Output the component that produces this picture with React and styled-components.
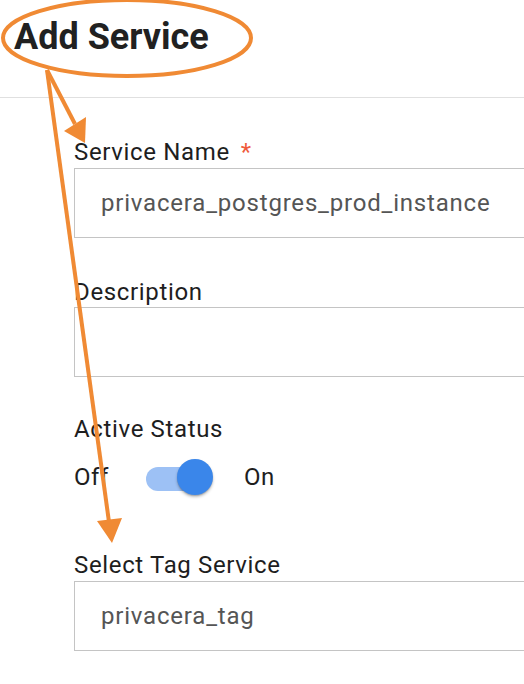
import React from "react";
import styled, { createGlobalStyle } from "styled-components";

const Global = createGlobalStyle`
  html, body { margin: 0; padding: 0; background: #fff; }
  body { font-family: Roboto, "Liberation Sans", sans-serif; color: #212121; }
  * { box-sizing: border-box; }
`;

const Page = styled.div`
  position: relative;
  width: 524px;
  height: 684px;
  overflow: hidden;
  background: #fff;
`;

const Header = styled.header`
  height: 98px;
  padding: 13px 0 0 14px;
  border-bottom: 1px solid #e0e0e0;
`;

const Title = styled.h1`
  margin: 0;
  font-size: 36px;
  line-height: 48px;
  font-weight: 700;
  color: #212121;
`;

const Form = styled.div`
  display: flex;
  flex-direction: column;
  padding: 40px 0 0 74px;
`;

const Field = styled.div`
  display: flex;
  flex-direction: column;
  margin-bottom: ${(p) => p.$gap ?? 40}px;
`;

const Label = styled.label`
  font-size: 24px;
  line-height: 28px;
  letter-spacing: 0.65px;
  color: #1e1e1e;
  margin-bottom: ${(p) => p.$mb ?? 2}px;
`;

const Star = styled.span`
  color: #ef5a3c;
  margin-left: 11px;
`;

const Box = styled.div`
  width: 560px;
  height: 70px;
  border: 1px solid #c4c4c4;
  display: flex;
  align-items: center;
  padding-left: 26px;
  font-size: 24px;
  letter-spacing: 0.8px;
  color: #555;
`;

const ToggleRow = styled.div`
  display: flex;
  align-items: center;
  height: 36px;
  margin-top: 16px;
  font-size: 24px;
  line-height: 28px;
  letter-spacing: 0.6px;
  color: #1e1e1e;
`;

const Switch = styled.span`
  position: relative;
  display: inline-block;
  width: 67px;
  height: 36px;
  margin: 0 31px 0 37px;
`;

const Track = styled.span`
  position: absolute;
  left: 0;
  top: 8px;
  width: 61px;
  height: 24px;
  border-radius: 12px;
  background: #9dc1f5;
`;

const Thumb = styled.span`
  position: absolute;
  left: 31px;
  top: 0;
  width: 36px;
  height: 36px;
  border-radius: 50%;
  background: #3a86ea;
  box-shadow: 0 2px 3px rgba(0, 0, 0, 0.25), 0 1px 1px rgba(0, 0, 0, 0.14);
`;

const Overlay = styled.svg`
  position: absolute;
  left: 0;
  top: 0;
  pointer-events: none;
`;

const ORANGE = "#f08a34";

export default function App() {
  return (
    <Page>
      <Global />
      <Header>
        <Title>Add Service</Title>
      </Header>
      <Form>
        <Field>
          <Label>
            Service Name<Star>*</Star>
          </Label>
          <Box>privacera_postgres_prod_instance</Box>
        </Field>
        <Field $gap={38}>
          <Label $mb={1}>Description</Label>
          <Box />
        </Field>
        <Field $gap={56}>
          <Label $mb={0}>Active Status</Label>
          <ToggleRow>
            <span>Off</span>
            <Switch>
              <Track />
              <Thumb />
            </Switch>
            <span>On</span>
          </ToggleRow>
        </Field>
        <Field>
          <Label>Select Tag Service</Label>
          <Box>privacera_tag</Box>
        </Field>
      </Form>
      <Overlay width="524" height="684" viewBox="0 0 524 684">
        <ellipse cx="127" cy="38" rx="124" ry="38" fill="none" stroke={ORANGE} strokeWidth="4" />
        <line x1="47" y1="70" x2="75" y2="124" stroke={ORANGE} strokeWidth="4" />
        <polygon points="85,143 64,131 86,117" fill={ORANGE} />
        <line x1="47" y1="70" x2="109" y2="522" stroke={ORANGE} strokeWidth="4" />
        <polygon points="112,543 97,521 122,518" fill={ORANGE} />
      </Overlay>
    </Page>
  );
}
